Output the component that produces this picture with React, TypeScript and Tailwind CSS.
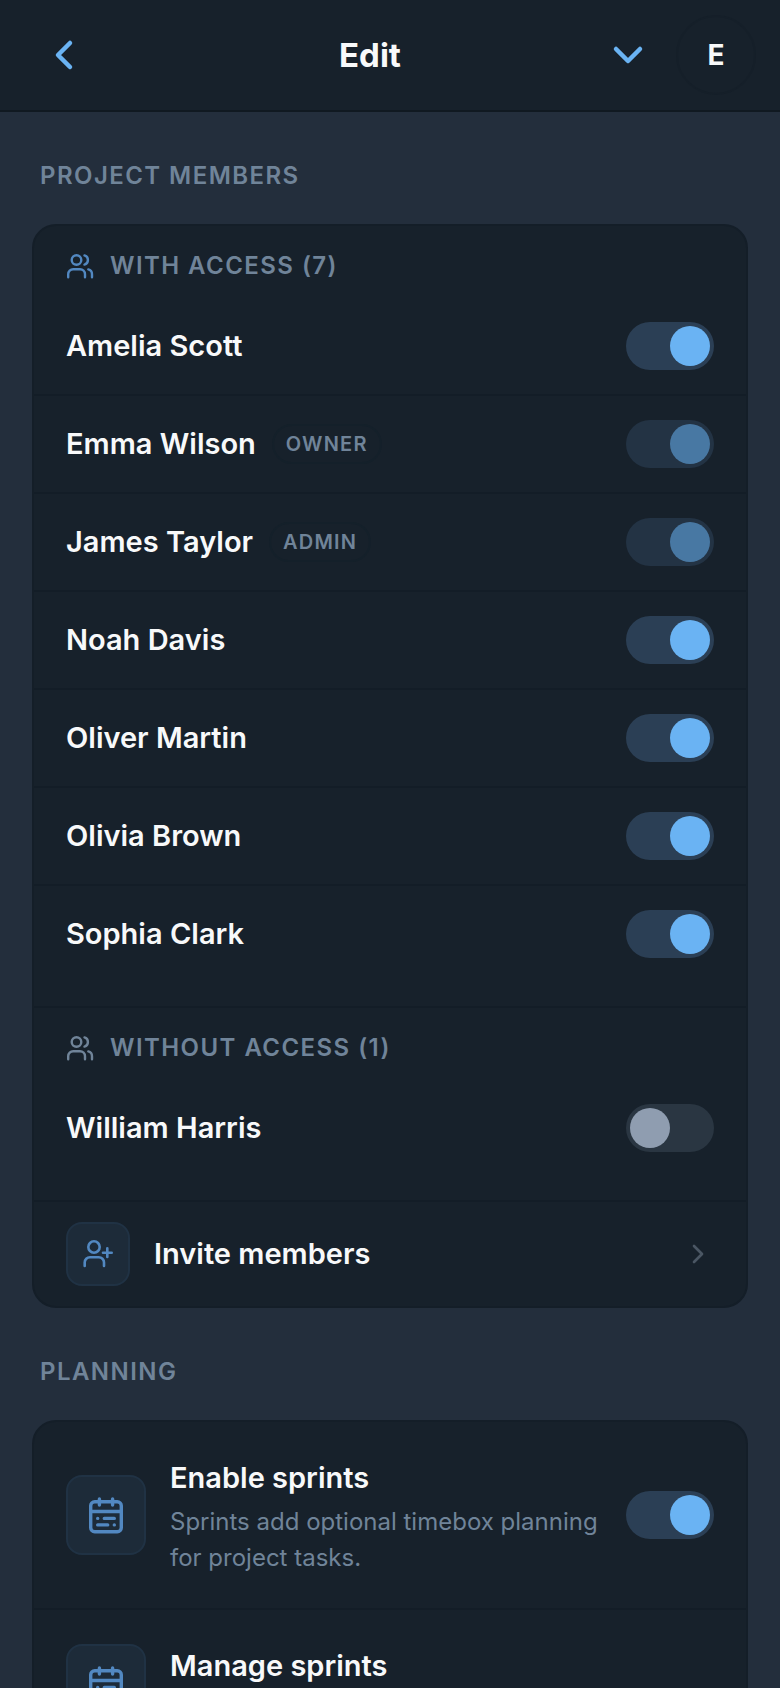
import React, { useState } from "react";
import { ChevronDown, ChevronLeft, ChevronRight } from "lucide-react";

interface Member {
  name: string;
  role?: string;
  locked?: boolean;
}

const withAccess: Member[] = [
  { name: "Amelia Scott" },
  { name: "Emma Wilson", role: "Owner", locked: true },
  { name: "James Taylor", role: "Admin", locked: true },
  { name: "Noah Davis" },
  { name: "Oliver Martin" },
  { name: "Olivia Brown" },
  { name: "Sophia Clark" },
];

const withoutAccess: Member[] = [{ name: "William Harris" }];

function UsersIcon({ className }: { className: string }) {
  return (
    <svg viewBox="0 0 28 28" fill="none" stroke="currentColor" strokeWidth="2.4" strokeLinecap="round" strokeLinejoin="round" className={className} aria-hidden="true">
      <circle cx="10.5" cy="8" r="4.8" />
      <path d="M2.2 25.2v-3a5 5 0 0 1 5-5h6.8a5 5 0 0 1 5 5v3" />
      <path d="M18.5 3.4a4.8 4.8 0 0 1 0 9.2" />
      <path d="M22.3 17.4a5 5 0 0 1 3.7 4.8v3" />
    </svg>
  );
}

function UserPlusIcon() {
  return (
    <svg viewBox="0 0 32 32" fill="none" stroke="currentColor" strokeWidth="2.6" strokeLinecap="round" strokeLinejoin="round" className="w-8 h-8" aria-hidden="true">
      <circle cx="12" cy="9" r="5.7" />
      <path d="M2.7 28v-3.5a5.3 5.3 0 0 1 5.3-5.3h8.7a5.3 5.3 0 0 1 5.3 5.3v3.5" />
      <path d="M25.3 10.3v8.7M21 14.7h8.7" />
    </svg>
  );
}

function SprintIcon() {
  return (
    <svg viewBox="0 0 40 40" fill="none" stroke="currentColor" strokeWidth="3.4" strokeLinecap="round" strokeLinejoin="round" className="w-10 h-10" aria-hidden="true">
      <rect x="4.7" y="6.7" width="30.6" height="30" rx="4" />
      <path d="M4.7 16.5h30.6M13.4 4v6M26.6 4v6M18.3 23.4h10M11.7 29.9h10M11.7 23.4h.01M28.3 29.9h.01" />
    </svg>
  );
}

interface ToggleProps {
  label: string;
  initial: boolean;
  disabled?: boolean;
}

function Toggle({ label, initial, disabled }: ToggleProps) {
  const [checked, setChecked] = useState(initial);

  return (
    <input
      type="checkbox"
      role="switch"
      aria-label={label}
      checked={checked}
      disabled={disabled}
      onChange={(e) => setChecked(e.target.checked)}
      className="appearance-none shrink-0 w-22 h-12 p-1 rounded-full bg-[#2a3642] checked:bg-[#2b3f55] disabled:opacity-60 cursor-pointer before:block before:w-10 before:h-10 before:rounded-full before:bg-[#8f9db0] checked:before:bg-[#6ab3f3] checked:before:ml-10"
    />
  );
}

function MemberList({ title, iconClass, members, access }: { title: string; iconClass: string; members: Member[]; access: boolean }) {
  return (
    <div className="pb-6 border-b-2 border-[#131d27]">
      <h3 className="flex items-center gap-4 px-8 pt-6 pb-4 text-2xl leading-8 font-semibold tracking-[0.06em] uppercase text-[#708499]">
        <UsersIcon className={iconClass} />
        {title} ({members.length})
      </h3>
      <ul className="divide-y-2 divide-[#131d27]">
        {members.map((member) => (
          <li key={member.name} className="flex items-center justify-between px-8 py-6">
            <div className="flex items-center gap-4">
              <span className="text-[29px] leading-10 font-semibold">{member.name}</span>
              {member.role && (
                <span className="px-3 rounded-full border-2 border-[#14202a] text-xl leading-9 font-semibold tracking-[0.06em] uppercase text-[#708499]">
                  {member.role}
                </span>
              )}
            </div>
            <Toggle label={`Access for ${member.name}`} initial={access} disabled={member.locked} />
          </li>
        ))}
      </ul>
    </div>
  );
}

function SectionTitle({ children }: { children: React.ReactNode }) {
  return (
    <h2 className="px-2 pt-12 pb-8 text-2xl leading-8 font-semibold tracking-[0.06em] uppercase text-[#708499]">{children}</h2>
  );
}

function IconTile({ children, className }: { children: React.ReactNode; className: string }) {
  return (
    <span className={`flex shrink-0 items-center justify-center rounded-2xl border-2 border-[#203244] bg-[#1d2b39] text-[#5288c1] ${className}`}>
      {children}
    </span>
  );
}

function SettingText({ title, hint }: { title: string; hint?: string }) {
  return (
    <span className="flex-1 self-start flex flex-col gap-0.5 text-left">
      <span className="text-[29px] leading-12 font-semibold">{title}</span>
      {hint && <span className="text-2xl leading-9 text-[#708499]">{hint}</span>}
    </span>
  );
}

export default function App() {
  return (
    <div className="h-screen overflow-hidden bg-[#232e3c] text-[#f8f9fa] font-['Inter','Liberation_Sans',sans-serif]">
      <header className="flex items-center h-28 px-6 bg-[#17212b] border-b-2 border-[#101921]">
        <div className="w-32">
          <button type="button" aria-label="Back" className="flex items-center justify-center w-20 h-20 text-[#6ab3f3]">
            <ChevronLeft size={48} strokeWidth={2.25} />
          </button>
        </div>
        <h1 className="flex-1 text-center text-[33px] leading-10 font-bold">Edit</h1>
        <div className="flex items-center gap-2">
          <button type="button" aria-label="More" className="flex items-center justify-center w-20 h-20 text-[#6ab3f3]">
            <ChevronDown size={48} strokeWidth={2.25} />
          </button>
          <button type="button" aria-label="Account" className="w-20 h-20 rounded-full border-2 border-[#151f29] text-[28px] font-bold">
            E
          </button>
        </div>
      </header>

      <main className="px-8">
        <SectionTitle>Project members</SectionTitle>
        <section className="rounded-3xl border-2 border-[#141e28] bg-[#17212b]">
          <MemberList title="With access" iconClass="w-7 h-7 text-[#5288c1]" members={withAccess} access={true} />
          <MemberList title="Without access" iconClass="w-7 h-7" members={withoutAccess} access={false} />
          <button type="button" className="flex items-center gap-6 w-full px-8 py-5 cursor-pointer">
            <IconTile className="w-16 h-16">
              <UserPlusIcon />
            </IconTile>
            <span className="flex-1 text-left text-[29px] leading-10 font-semibold">Invite members</span>
            <ChevronRight size={32} className="text-[#4a5663]" />
          </button>
        </section>

        <SectionTitle>Planning</SectionTitle>
        <section className="rounded-3xl border-2 border-[#141e28] bg-[#17212b] divide-y-2 divide-[#131d27]">
          <div className="flex items-center gap-6 px-8 py-8">
            <IconTile className="w-20 h-20">
              <SprintIcon />
            </IconTile>
            <SettingText title="Enable sprints" hint="Sprints add optional timebox planning for project tasks." />
            <Toggle label="Enable sprints" initial={true} />
          </div>
          <button type="button" className="flex items-center gap-6 w-full min-h-37 px-8 py-8 cursor-pointer">
            <IconTile className="w-20 h-20">
              <SprintIcon />
            </IconTile>
            <SettingText title="Manage sprints" />
          </button>
        </section>
      </main>
    </div>
  );
}
